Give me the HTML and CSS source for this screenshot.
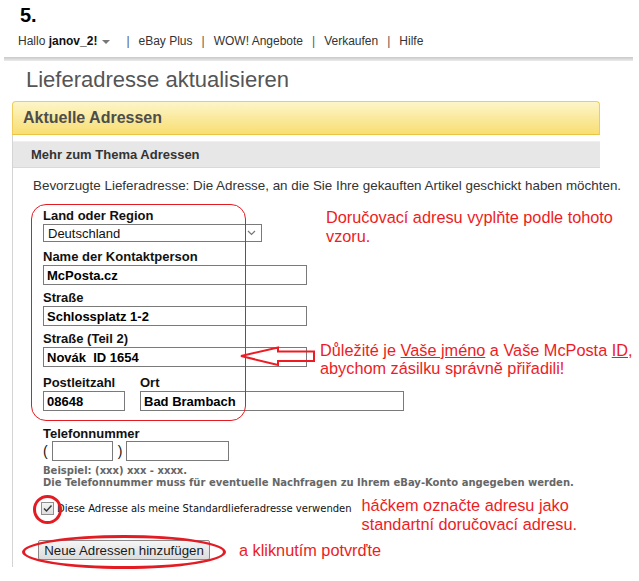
FILE: index.html
```html
<!DOCTYPE html>
<html lang="de">
<head>
<meta charset="utf-8">
<title>Lieferadresse aktualisieren</title>
<link rel="stylesheet" href="styles.css">
</head>
<body>
<div class="step">5.</div>
<nav class="topnav">
  <span class="hello">Hallo <b>janov_2!</b></span>
  <span class="caret"></span>
  <span class="sep">|</span>
  <span>eBay Plus</span>
  <span class="sep">|</span>
  <span>WOW! Angebote</span>
  <span class="sep">|</span>
  <span>Verkaufen</span>
  <span class="sep">|</span>
  <span>Hilfe</span>
</nav>
<div class="shadowbar"></div>
<h1 class="title">Lieferadresse aktualisieren</h1>
<section class="panel">
  <div class="panel-head">Aktuelle Adressen</div>
  <div class="panel-content">
    <div class="panel-sub">Mehr zum Thema Adressen</div>
    <div class="panel-body">
      <p class="intro">Bevorzugte Lieferadresse: Die Adresse, an die Sie Ihre gekauften Artikel geschickt haben möchten.</p>
      <form class="addr">
        <div class="field f-land">
          <label class="lbl">Land oder Region</label>
          <div class="select"><span>Deutschland</span>
            <svg class="chev" width="9" height="6" viewBox="0 0 9 6"><path d="M1 1 L4.5 4.5 L8 1" fill="none" stroke="#777" stroke-width="1.2"/></svg>
          </div>
        </div>
        <div class="field">
          <label class="lbl">Name der Kontaktperson</label>
          <input class="txt w-long" type="text" value="McPosta.cz">
        </div>
        <div class="field">
          <label class="lbl">Straße</label>
          <input class="txt w-long" type="text" value="Schlossplatz 1-2">
        </div>
        <div class="field f-street2">
          <label class="lbl">Straße (Teil 2)</label>
          <input class="txt w-long" type="text" value="Novák  ID 1654">
        </div>
        <div class="field-row">
          <div class="field">
            <label class="lbl">Postleitzahl</label>
            <input class="txt w-plz" type="text" value="08648">
          </div>
          <div class="field">
            <label class="lbl">Ort</label>
            <input class="txt w-long" type="text" value="Bad Brambach">
          </div>
        </div>
        <div class="field f-phone">
          <label class="lbl lbl-phone">Telefonnummer</label>
          <div class="phone">
            <span class="paren">(</span>
            <input class="txt w-area" type="text" value="">
            <span class="paren paren-close">)</span>
            <input class="txt w-num" type="text" value="">
          </div>
        </div>
        <p class="hint">Beispiel: (xxx) xxx - xxxx.<br>Die Telefonnummer muss für eventuelle Nachfragen zu Ihrem eBay-Konto angegeben werden.</p>
        <div class="check-row">
          <div class="check">
            <span class="box"><svg width="11" height="11" viewBox="0 0 11 11"><path d="M2 5.5 L4.5 8 L9.5 2.5" fill="none" stroke="#333" stroke-width="1.4"/></svg></span>
            <span class="check-text">Diese Adresse als meine Standardlieferadresse verwenden</span>
          </div>
          <div class="note note-check">háčkem označte adresu jako<br>standartní doručovací adresu.</div>
        </div>
        <div class="btn-row">
          <button type="button" class="btn">Neue Adressen hinzufügen</button>
          <span class="note">a kliknutím potvrďte</span>
        </div>

        <div class="mark-box"></div>
        <div class="note note-land">Doručovací adresu vyplňte podle tohoto<br>vzoru.</div>
        <svg class="arrow" width="78" height="24" viewBox="0 0 78 24"><path d="M2 11 L39 2.5 L39 6.5 L75 6.5 L75 16 L39 16 L39 20 Z" fill="none" stroke="#ed1c24" stroke-width="2" stroke-linejoin="miter"/></svg>
        <div class="note note-id">Důležité je <u>Vaše jméno</u> a Vaše McPosta <u>ID</u>,<br>abychom zásilku správně přiřadili!</div>
        <div class="mark-circle"></div>
        <div class="mark-ellipse"></div>
      </form>
    </div>
  </div>
</section>
</body>
</html>
```
FILE: styles.css
```css
html, body {
  margin: 0;
  padding: 0;
  background: #fff;
}
body {
  font-family: "Liberation Sans", Arial, sans-serif;
  color: #333;
  width: 639px;
  height: 581px;
  overflow: hidden;
}
.step {
  font-size: 20px;
  font-weight: bold;
  line-height: 23px;
  color: #000;
  padding: 4px 0 0 20px;
}
.topnav {
  margin-top: 6px;
  padding-left: 18px;
  display: flex;
  align-items: center;
  font-size: 12px;
  line-height: 16px;
  color: #333;
}
.topnav b {
  color: #111;
}
.caret {
  width: 0;
  height: 0;
  border-left: 4px solid transparent;
  border-right: 4px solid transparent;
  border-top: 4px solid #777;
  margin-left: 5px;
  margin-right: 7px;
  margin-top: 1px;
}
.sep {
  color: #555;
  margin: 0 9px;
}
.shadowbar {
  margin: 8px 6px 0 4px;
  height: 4px;
  background: linear-gradient(#c8c8c8, #ececec);
}
.title {
  margin: 6px 0 0 26px;
  font-size: 22px;
  line-height: 26px;
  font-weight: normal;
  color: #555;
}
.panel {
  margin: 8px 0 0 12px;
  width: 588px;
}
.panel-head {
  height: 32px;
  line-height: 32px;
  border: 1px solid #f0cd5a;
  border-bottom-color: #e9c446;
  border-radius: 4px 4px 0 0;
  background: linear-gradient(#fdf5c9, #f8de72);
  padding-left: 10px;
  font-size: 16px;
  font-weight: bold;
  color: #4d4d4d;
}
.panel-content {
  border-left: 1px solid #d4d4d4;
  padding-top: 6px;
  padding-bottom: 7px;
}
.panel-sub {
  height: 25px;
  line-height: 25px;
  background: #e7e7e7;
  border-top: 1px solid #efefef;
  border-bottom: 1px solid #d9d9d9;
  padding-left: 18px;
  font-size: 13px;
  font-weight: bold;
  color: #333;
}
.panel-body {
  padding-left: 20px;
}
.intro {
  margin: 10px 0 0 0;
  font-size: 13.4px;
  line-height: 16px;
  color: #333;
  white-space: nowrap;
}
.addr {
  position: relative;
  margin: 0 0 0 10px;
  padding-top: 13px;
}
.field {
  margin-bottom: 4px;
}
.f-land {
  margin-bottom: 6px;
}
.f-street2 {
  margin-bottom: 7px;
}
.lbl {
  display: block;
  font-size: 13px;
  line-height: 17px;
  font-weight: bold;
  color: #111;
}
.select {
  box-sizing: border-box;
  width: 219px;
  height: 18px;
  border: 1px solid #7a7a7a;
  display: flex;
  align-items: center;
  justify-content: space-between;
  padding: 0 5px 0 4px;
  font-size: 13px;
  color: #111;
  background: #fff;
}
.chev {
  display: block;
}
.txt {
  box-sizing: border-box;
  display: block;
  height: 20px;
  margin: 0;
  border: 1px solid #7a7a7a;
  padding: 0 3px;
  font-family: "Liberation Sans", Arial, sans-serif;
  font-size: 13px;
  font-weight: bold;
  color: #000;
  background: #fff;
  outline: none;
}
.w-long { width: 264px; }
.w-plz { width: 82px; }
.w-area { width: 61px; }
.w-num { width: 103px; }
.field-row {
  display: flex;
  gap: 15px;
  margin-bottom: 15px;
}
.field-row .field {
  margin-bottom: 0;
}
.lbl-phone {
  line-height: 15px;
}
.f-phone {
  margin-bottom: 0;
}
.phone {
  display: flex;
  align-items: center;
}
.paren {
  font-size: 14px;
  color: #111;
  padding: 0 4px 0 0;
}
.paren-close {
  padding: 0 4px 0 5px;
}
.hint {
  margin: 4px 0 0 0;
  font-family: "DejaVu Sans", Verdana, sans-serif;
  font-size: 10px;
  line-height: 12px;
  font-weight: bold;
  color: #666;
}
.check-row {
  display: flex;
  align-items: flex-start;
  margin-top: 7px;
}
.check {
  display: flex;
  align-items: center;
  margin: 6px 0 0 -2px;
}
.box {
  box-sizing: border-box;
  width: 13px;
  height: 13px;
  border: 1px solid #8f8f8f;
  background: linear-gradient(#f4f4f4, #dedede);
  display: flex;
  align-items: center;
  justify-content: center;
}
.box svg { display: block; }
.check-text {
  margin-left: 3px;
  font-family: "DejaVu Sans", Verdana, sans-serif;
  font-size: 10px;
  line-height: 12px;
  color: #111;
}
.note {
  font-family: "Liberation Sans", Arial, sans-serif;
  font-size: 16.3px;
  line-height: 19px;
  color: #ed1c24;
  white-space: nowrap;
}
.note-check {
  margin-left: 10px;
}
.btn-row {
  display: flex;
  align-items: center;
  margin-top: 6px;
  gap: 29px;
}
.btn {
  box-sizing: border-box;
  margin-left: -5px;
  width: 172px;
  height: 20px;
  padding: 0;
  border: 1px solid #8a8a8a;
  border-radius: 2px;
  background: linear-gradient(#f5f5f5, #dcdcdc);
  font-family: "Liberation Sans", Arial, sans-serif;
  font-size: 13.3px;
  color: #1a1a1a;
}
/* annotation overlays */
.mark-box {
  position: absolute;
  left: -12px;
  top: 10px;
  width: 215px;
  height: 217px;
  box-sizing: border-box;
  border: 1px solid #e31b23;
  border-radius: 15px;
  pointer-events: none;
}
.note-land {
  position: absolute;
  left: 283px;
  top: 14px;
}
.note-id {
  position: absolute;
  left: 277px;
  top: 147px;
  line-height: 18px;
}
.arrow {
  position: absolute;
  left: 196px;
  top: 151px;
}
.mark-circle {
  position: absolute;
  left: -10px;
  top: 301px;
  width: 29px;
  height: 29px;
  box-sizing: border-box;
  border: 3px solid #e31b23;
  border-radius: 50%;
}
.mark-ellipse {
  position: absolute;
  left: -21px;
  top: 341px;
  width: 204px;
  height: 34px;
  box-sizing: border-box;
  border: 3px solid #e31b23;
  border-radius: 50%;
}
```
